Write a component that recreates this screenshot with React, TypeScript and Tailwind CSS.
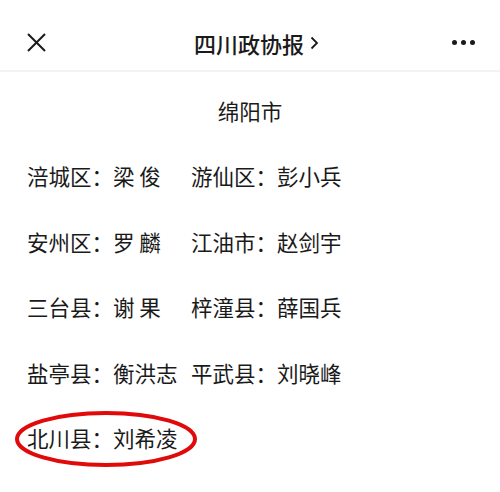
import React from 'react';

const rows: [string, string | null][] = [
  ['涪城区：梁 俊', '游仙区：彭小兵'],
  ['安州区：罗 麟', '江油市：赵剑宇'],
  ['三台县：谢 果', '梓潼县：薛国兵'],
  ['盐亭县：衡洪志', '平武县：刘晓峰'],
];

export default function App() {
  return (
    <div className="w-[500px] h-[492px] overflow-hidden bg-white font-['Noto_Sans_CJK_SC','Noto_Sans',sans-serif] text-[#1a1a1a]">
      {/* top bar */}
      <div className="h-[72px] pt-[15px] flex items-center justify-between px-[27px] border-b-2 border-[#f3f3f3]">
        <svg width="19" height="19" viewBox="0 0 19 19">
          <path d="M1 1L18 18M18 1L1 18" stroke="#1a1a1a" strokeWidth="2" fill="none" />
        </svg>
        <div className="relative text-[22px] font-medium leading-none">
          四川政协报
          <svg
            width="9"
            height="14"
            viewBox="0 0 9 14"
            className="absolute left-[calc(100%+6px)] top-1/2 -translate-y-1/2"
          >
            <path d="M1.5 1.5L7 7L1.5 12.5" stroke="#1a1a1a" strokeWidth="1.8" fill="none" />
          </svg>
        </div>
        <div className="flex gap-[4px] mr-[-2px]">
          <span className="w-[5px] h-[5px] rounded-full bg-[#1a1a1a]" />
          <span className="w-[5px] h-[5px] rounded-full bg-[#1a1a1a]" />
          <span className="w-[5px] h-[5px] rounded-full bg-[#1a1a1a]" />
        </div>
      </div>

      {/* article body */}
      <div className="pt-[6px] px-[27px] text-[21.5px]">
        <div className="h-[65.5px] flex items-center justify-center">绵阳市</div>
        {rows.map(([a, b]) => (
          <div key={a} className="h-[65.5px] grid grid-cols-[164px_auto] items-center whitespace-pre">
            <span>{a}</span>
            <span>{b}</span>
          </div>
        ))}
        <div className="relative h-[65.5px] flex items-center">
          <span>北川县：刘希凌</span>
          <svg
            width="188"
            height="60"
            viewBox="0 0 188 60"
            className="absolute left-[-15px] top-[3px]"
          >
            <ellipse cx="94" cy="30" rx="89" ry="26" stroke="#e10a0a" strokeWidth="4" fill="none" />
          </svg>
        </div>
      </div>
    </div>
  );
}
